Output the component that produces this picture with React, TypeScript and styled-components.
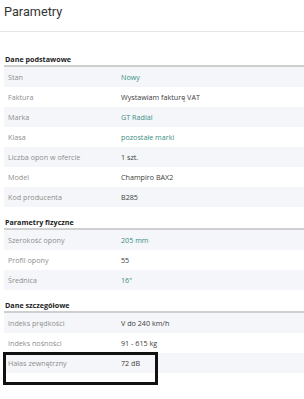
import styled, { createGlobalStyle } from "styled-components";

const GlobalStyle = createGlobalStyle`
  html, body {
    margin: 0;
    padding: 0;
    background: #fff;
  }
  body {
    font-family: "Open Sans", "Liberation Sans", sans-serif;
  }
`

const Page = styled.div`
  width: 304px;
  height: 399px;
  overflow: hidden;
  background: #fff;
`

const Header = styled.div`
  padding: 4px 4px 12px;
  border-bottom: 1px solid #e6e6e6;
`

const Title = styled.h2`
  margin: 0;
  font-family: Roboto, "Liberation Sans", sans-serif;
  font-size: 12.7px;
  line-height: 15px;
  font-weight: 400;
  color: #333;
`

const Section = styled.section<{ $first?: boolean }>`
  margin: ${({ $first }) => ($first ? "22px" : "10px")} 0 0 4px;
`

const SectionTitle = styled.div`
  font-size: 7.2px;
  line-height: 10px;
  font-weight: 700;
  color: #222;
  padding: 0 0 1px 1px;
  border-bottom: 2px solid #cfcfcf;
`

const Row = styled.div<{ $shaded: boolean }>`
  position: relative;
  display: grid;
  grid-template-columns: 113px 1fr;
  align-items: center;
  height: 20px;
  padding-left: 4px;
  background: ${({ $shaded }) => ($shaded ? "#f4f6f9" : "#fff")};
  font-size: 7.2px;
`

const Label = styled.span`
  color: #8e8e8e;
`

const Value = styled.span<{ $link?: boolean }>`
  color: ${({ $link }) => ($link ? "#3a8f84" : "#3d3d3d")};
`

// black frame drawn over the marked row
const Highlight = styled.div`
  position: absolute;
  left: -1px;
  top: -1px;
  width: 155px;
  height: 33px;
  border: 3px solid #111;
  box-sizing: border-box;
  pointer-events: none;
`

type Param = { label: string; value: string; link?: boolean; marked?: boolean }

const groups: { title: string; rows: Param[] }[] = [
  {
    title: "Dane podstawowe",
    rows: [
      { label: "Stan", value: "Nowy", link: true },
      { label: "Faktura", value: "Wystawiam fakturę VAT" },
      { label: "Marka", value: "GT Radial", link: true },
      { label: "Klasa", value: "pozostałe marki", link: true },
      { label: "Liczba opon w ofercie", value: "1 szt." },
      { label: "Model", value: "Champiro BAX2" },
      { label: "Kod producenta", value: "B285" },
    ],
  },
  {
    title: "Parametry fizyczne",
    rows: [
      { label: "Szerokość opony", value: "205 mm", link: true },
      { label: "Profil opony", value: "55" },
      { label: "Średnica", value: "16\"", link: true },
    ],
  },
  {
    title: "Dane szczegółowe",
    rows: [
      { label: "Indeks prędkości", value: "V do 240 km/h" },
      { label: "Indeks nośności", value: "91 - 615 kg" },
      { label: "Hałas zewnętrzny", value: "72 dB", marked: true },
    ],
  },
]

export default function App() {
  return (
    <Page>
      <GlobalStyle />
      <Header>
        <Title>Parametry</Title>
      </Header>
      {groups.map((g, gi) => (
        <Section key={g.title} $first={gi === 0}>
          <SectionTitle>{g.title}</SectionTitle>
          {g.rows.map((r, i) => (
            <Row key={r.label} $shaded={i % 2 === 0}>
              <Label>{r.label}</Label>
              <Value $link={r.link}>{r.value}</Value>
              {r.marked && <Highlight />}
            </Row>
          ))}
        </Section>
      ))}
    </Page>
  )
}
